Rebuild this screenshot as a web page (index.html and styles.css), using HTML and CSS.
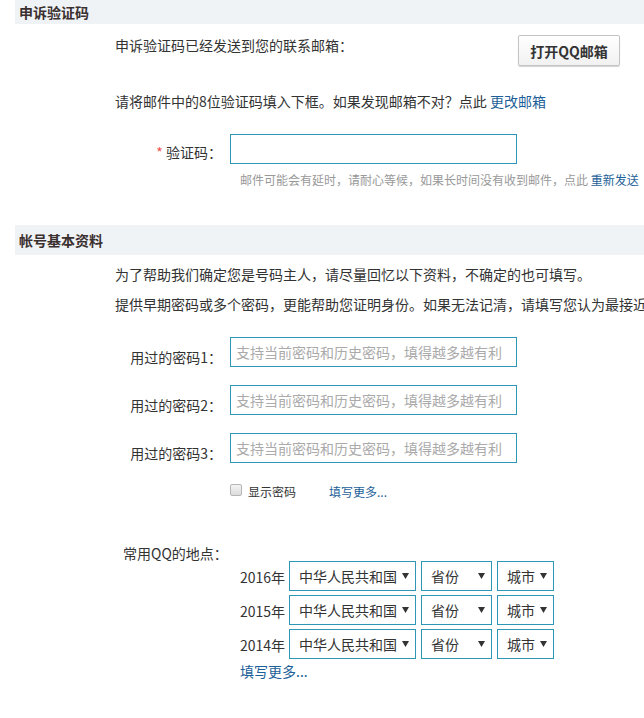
FILE: index.html
```html
<!DOCTYPE html>
<html lang="zh-CN">
<head>
<meta charset="utf-8">
<title>申诉验证码</title>
<link rel="stylesheet" href="styles.css">
</head>
<body>
<div class="page">
  <section class="section">
    <h2 class="band">申诉验证码</h2>
    <div class="email-row">
      <p class="line">申诉验证码已经发送到您的联系邮箱：</p>
      <button class="btn" type="button">打开QQ邮箱</button>
    </div>
    <p class="line line-fill">请将邮件中的8位验证码填入下框。如果发现邮箱不对？点此 <a class="link" href="#">更改邮箱</a></p>
    <div class="field code-field">
      <label class="label"><span class="star">*</span> 验证码：</label>
      <input class="input" type="text">
    </div>
    <p class="hint">邮件可能会有延时，请耐心等候，如果长时间没有收到邮件，点此 <a class="link" href="#">重新发送</a></p>
  </section>

  <section class="section second">
    <h2 class="band">帐号基本资料</h2>
    <div class="intro">
      <p class="intro-line">为了帮助我们确定您是号码主人，请尽量回忆以下资料，不确定的也可填写。</p>
      <p class="intro-line">提供早期密码或多个密码，更能帮助您证明身份。如果无法记清，请填写您认为最接近</p>
    </div>
    <div class="pw-list">
      <div class="field">
        <label class="label pw-label">用过的密码1：</label>
        <input class="input" type="text" placeholder="支持当前密码和历史密码，填得越多越有利">
      </div>
      <div class="field">
        <label class="label pw-label">用过的密码2：</label>
        <input class="input" type="text" placeholder="支持当前密码和历史密码，填得越多越有利">
      </div>
      <div class="field">
        <label class="label pw-label">用过的密码3：</label>
        <input class="input" type="text" placeholder="支持当前密码和历史密码，填得越多越有利">
      </div>
    </div>
    <div class="check-row">
      <span class="checkbox"></span>
      <span class="check-text">显示密码</span>
      <a class="link more" href="#">填写更多...</a>
    </div>

    <div class="loc-label-row">
      <span class="label">常用QQ的地点：</span>
    </div>
    <div class="loc-list">
      <div class="loc-row">
        <span class="year">2016年</span>
        <div class="sel sel-country"><span>中华人民共和国</span><svg class="tri" width="7" height="6" viewBox="0 0 7 6"><path d="M0 0H7L3.5 6Z" fill="#333"/></svg></div>
        <div class="sel sel-prov"><span>省份</span><svg class="tri" width="7" height="6" viewBox="0 0 7 6"><path d="M0 0H7L3.5 6Z" fill="#333"/></svg></div>
        <div class="sel sel-city"><span>城市</span><svg class="tri" width="7" height="6" viewBox="0 0 7 6"><path d="M0 0H7L3.5 6Z" fill="#333"/></svg></div>
      </div>
      <div class="loc-row">
        <span class="year">2015年</span>
        <div class="sel sel-country"><span>中华人民共和国</span><svg class="tri" width="7" height="6" viewBox="0 0 7 6"><path d="M0 0H7L3.5 6Z" fill="#333"/></svg></div>
        <div class="sel sel-prov"><span>省份</span><svg class="tri" width="7" height="6" viewBox="0 0 7 6"><path d="M0 0H7L3.5 6Z" fill="#333"/></svg></div>
        <div class="sel sel-city"><span>城市</span><svg class="tri" width="7" height="6" viewBox="0 0 7 6"><path d="M0 0H7L3.5 6Z" fill="#333"/></svg></div>
      </div>
      <div class="loc-row">
        <span class="year">2014年</span>
        <div class="sel sel-country"><span>中华人民共和国</span><svg class="tri" width="7" height="6" viewBox="0 0 7 6"><path d="M0 0H7L3.5 6Z" fill="#333"/></svg></div>
        <div class="sel sel-prov"><span>省份</span><svg class="tri" width="7" height="6" viewBox="0 0 7 6"><path d="M0 0H7L3.5 6Z" fill="#333"/></svg></div>
        <div class="sel sel-city"><span>城市</span><svg class="tri" width="7" height="6" viewBox="0 0 7 6"><path d="M0 0H7L3.5 6Z" fill="#333"/></svg></div>
      </div>
    </div>
    <a class="link loc-more" href="#">填写更多...</a>
  </section>
</div>
</body>
</html>
```
FILE: styles.css
```css
* { box-sizing: border-box; }
html, body {
  margin: 0;
  padding: 0;
  background: #fff;
  overflow: hidden;
}
body {
  font-family: "Noto Sans CJK SC", "Microsoft YaHei", sans-serif;
  font-size: 14px;
  color: #333;
  width: 644px;
}
.page {
  margin-left: 15px;
  width: 629px;
}
p { margin: 0; }
.band {
  margin: 0;
  height: 24px;
  line-height: 24px;
  padding-left: 4px;
  background: #f0f3f6;
  font-size: 14px;
  font-weight: bold;
  color: #3a3030;
}
.second .band {
  height: 30px;
  line-height: 30px;
  margin-top: 37px;
}
.email-row {
  display: flex;
  justify-content: space-between;
  align-items: flex-start;
  margin-top: 11px;
  padding-left: 100px;
  padding-right: 24px;
}
.line {
  line-height: 20px;
  white-space: nowrap;
}
.line-fill {
  margin-top: 25px;
  padding-left: 100px;
}
.btn {
  width: 102px;
  height: 31px;
  border: 1px solid #c4c4c4;
  border-radius: 2px;
  background: linear-gradient(#ffffff, #f1f1f1);
  box-shadow: 0 1px 1px rgba(0,0,0,0.18);
  font-family: "Noto Sans CJK SC", sans-serif;
  font-size: 14px;
  font-weight: bold;
  color: #333;
  padding: 0;
}
.link {
  color: #1d5f98;
  text-decoration: none;
}
.field {
  display: flex;
  align-items: flex-start;
  padding-left: 100px;
}
.code-field { margin-top: 23px; }
.label {
  width: 107px;
  margin-right: 8px;
  text-align: right;
  line-height: 20px;
  white-space: nowrap;
}
.code-field .label { margin-top: 8px; }
.star { color: #f05050; }
.input {
  width: 287px;
  height: 30px;
  border: 1px solid #2f97b6;
  padding: 0 5px;
  font-family: "Noto Sans CJK SC", sans-serif;
  font-size: 14px;
  color: #333;
  outline: none;
}
.input::placeholder { color: #aaa; }
.hint {
  margin-top: 8px;
  padding-left: 225px;
  font-size: 12px;
  line-height: 16px;
  color: #999;
  white-space: nowrap;
}
.intro {
  margin-top: 4px;
  padding-left: 100px;
}
.intro-line {
  line-height: 30px;
  white-space: nowrap;
}
.pw-list {
  margin-top: 18px;
  display: flex;
  flex-direction: column;
  gap: 18px;
}
.pw-label { margin-top: 10px; }
.check-row {
  display: flex;
  align-items: center;
  margin-top: 18px;
  padding-left: 215px;
  height: 20px;
  font-size: 12px;
}
.checkbox {
  width: 12px;
  height: 12px;
  border: 1px solid #b5b5b5;
  border-radius: 2px;
  background: linear-gradient(#f4f4f4, #dcdcdc);
  margin-right: 6px;
  margin-top: -3px;
}
.check-text { color: #333; }
.more { margin-left: 33px; }
.loc-label-row {
  display: flex;
  margin-top: 42px;
  padding-left: 108px;
  height: 18px;
}
.loc-label-row .label { line-height: 20px; width: auto; }
.loc-list {
  display: flex;
  flex-direction: column;
  gap: 4px;
  padding-left: 225px;
}
.loc-row {
  display: flex;
  align-items: center;
  gap: 4px;
}
.year {
  flex: none;
  white-space: nowrap;
  line-height: 20px;
  margin-top: 2px;
}
.sel {
  flex: none;
  white-space: nowrap;
  height: 30px;
  border: 1px solid #2f97b6;
  display: flex;
  align-items: center;
  justify-content: space-between;
  padding: 0 6px 0 9px;
  line-height: 20px;
}
.sel-country { width: 127px; }
.sel-prov { width: 71px; }
.sel-city { width: 57px; }
.sel + .sel { margin-left: 1px; }
.tri { flex: none; }
.loc-more {
  display: block;
  margin-top: 2px;
  padding-left: 225px;
  line-height: 20px;
}
```
